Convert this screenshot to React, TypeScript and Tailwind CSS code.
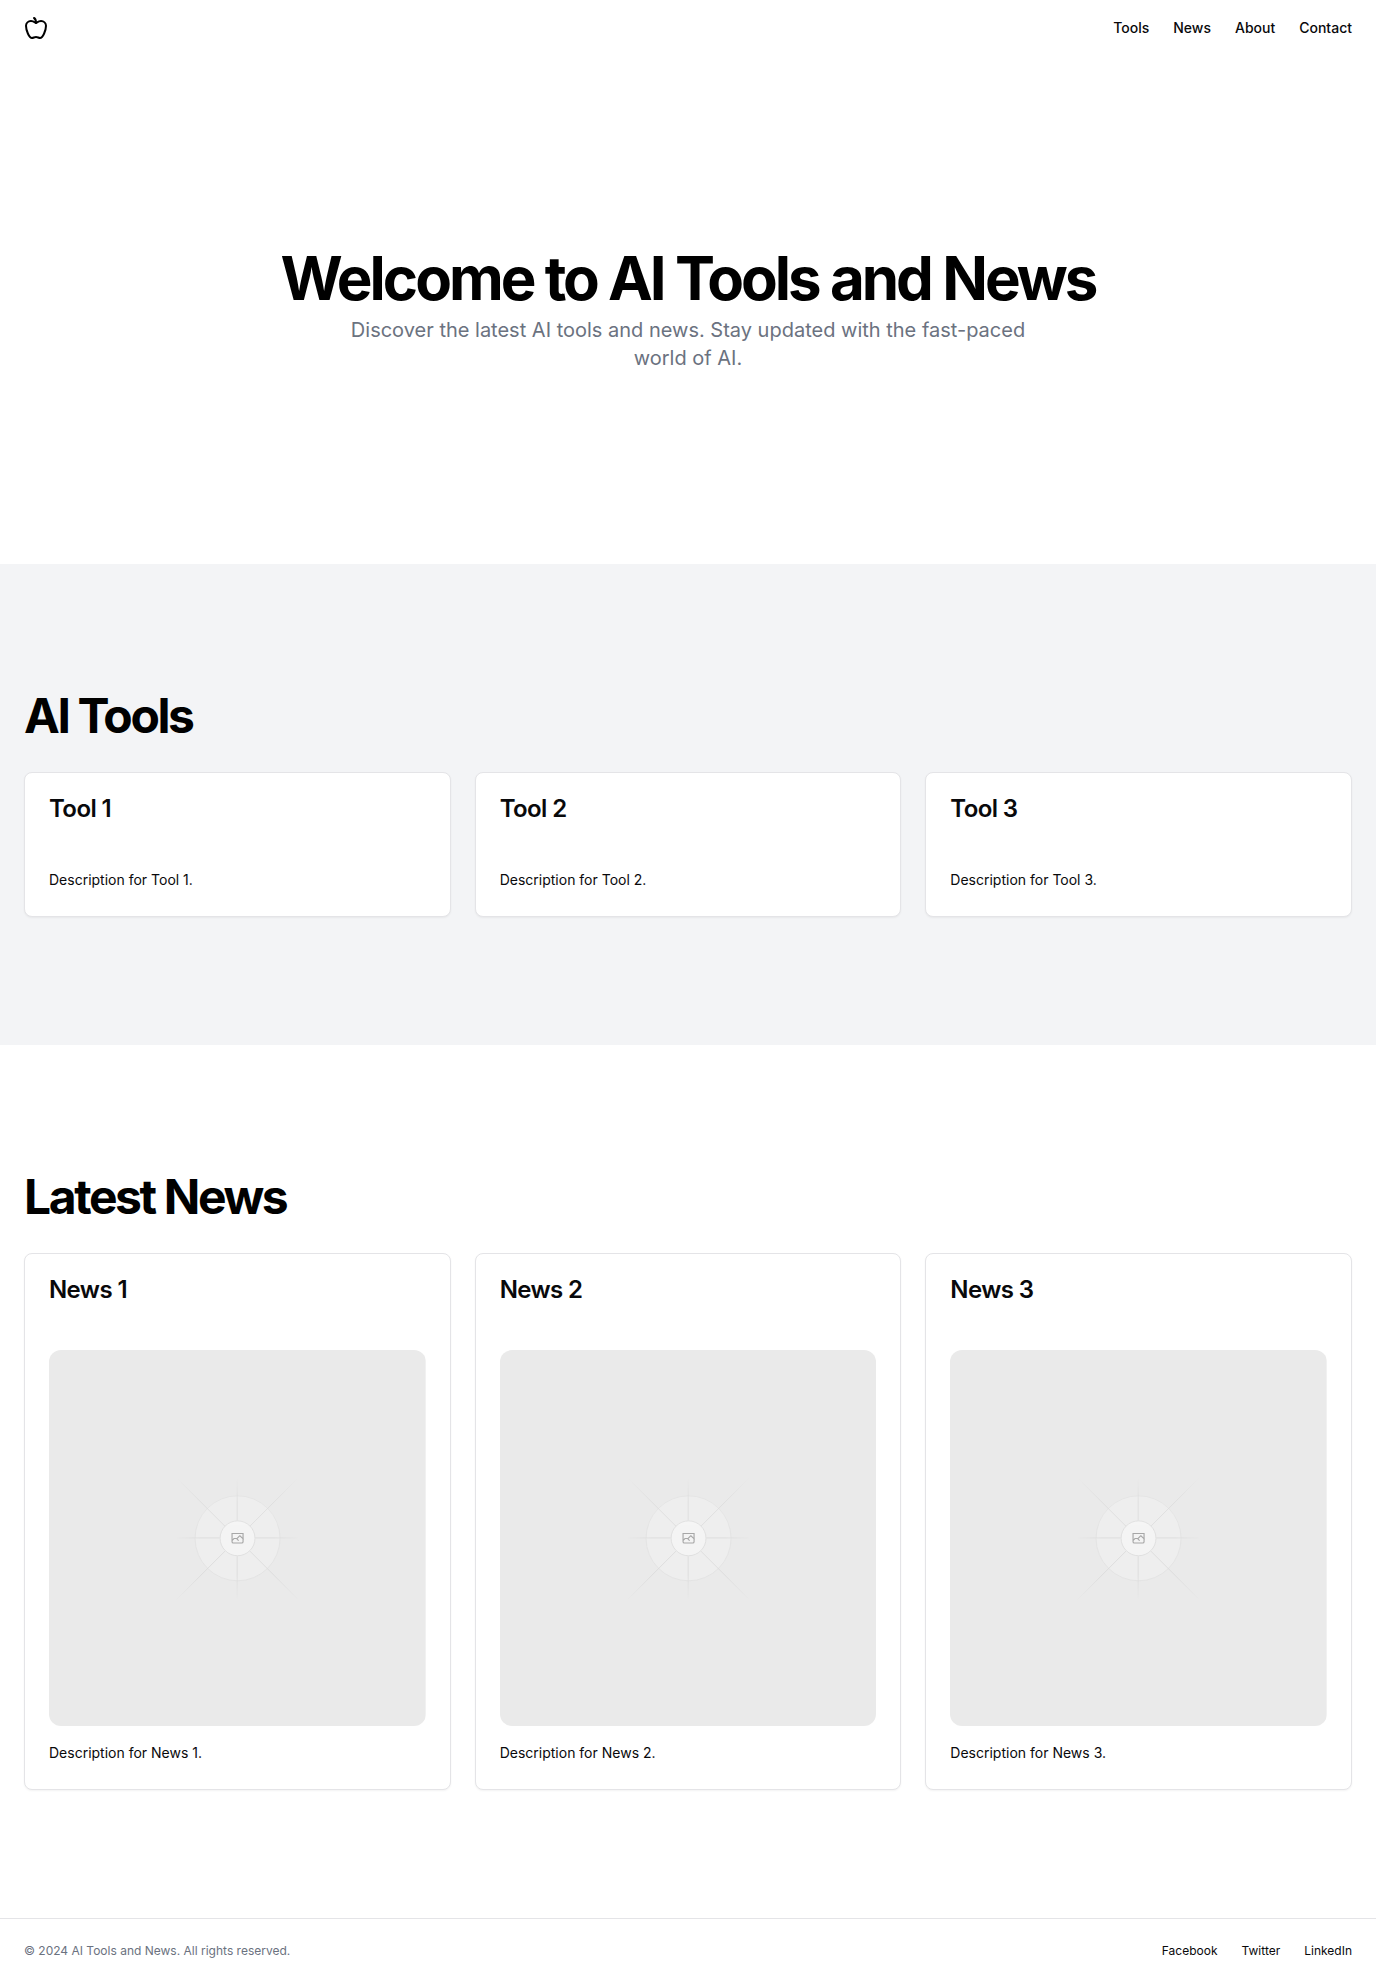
const navLinks = ["Tools", "News", "About", "Contact"];
const socialLinks = ["Facebook", "Twitter", "LinkedIn"];
const tools = ["Tool 1", "Tool 2", "Tool 3"];
const news = ["News 1", "News 2", "News 3"];

function AppleIcon() {
  return (
    <svg
      viewBox="0 0 24 24"
      fill="none"
      stroke="currentColor"
      strokeWidth="2"
      strokeLinecap="round"
      strokeLinejoin="round"
      aria-hidden="true"
      className="size-6 text-black"
    >
      <path d="M12 20.94c1.5 0 2.75 1.06 4 1.06 3 0 6-8 6-12.22A4.91 4.91 0 0 0 17 5c-2.22 0-4 1.44-5 2-1-.56-2.78-2-5-2a4.9 4.9 0 0 0-5 4.78C2 14 5 22 8 22c1.25 0 2.5-1.06 4-1.06Z" />
      <path d="M10 2c1 .5 2 2 2 5" />
    </svg>
  );
}

function Placeholder({ id, label }: { id: string; label: string }) {
  const fade = (name: string, x1: number, y1: number, x2: number, y2: number) => (
    <linearGradient id={`${id}-${name}`} x1={x1} y1={y1} x2={x2} y2={y2} gradientUnits="userSpaceOnUse">
      <stop stopColor="#C9C9C9" stopOpacity="0" />
      <stop offset=".208" stopColor="#C9C9C9" />
      <stop offset=".792" stopColor="#C9C9C9" />
      <stop offset="1" stopColor="#C9C9C9" stopOpacity="0" />
    </linearGradient>
  );
  return (
    <svg viewBox="0 0 1200 1200" fill="none" role="img" aria-label={label} className="block aspect-square w-full rounded-xl">
      <rect width="1200" height="1200" fill="#EAEAEA" rx="3" />
      <g opacity=".5">
        <g opacity=".5">
          <circle cx="600.7" cy="599.9" r="136.6" fill="#FAFAFA" />
          <circle cx="600.7" cy="599.9" r="135.4" stroke="#C9C9C9" strokeWidth="2.418" />
        </g>
        <g strokeWidth="2.418">
          <path stroke={`url(#${id}-a)`} d="M404.8 796.6 796.3 405.2" />
          <path stroke={`url(#${id}-b)`} d="M404.846 598.671h391.726" />
          <path stroke={`url(#${id}-c)`} d="M599.5 795.742V404.017" />
          <path stroke={`url(#${id}-d)`} d="m795.717 796.597-391.441-391.44" />
        </g>
        <circle cx="600.7" cy="599.9" r="56.8" fill="#fff" />
        <path
          fill="#666"
          fillRule="evenodd"
          clipRule="evenodd"
          d="M616.426 586.58h-31.434v16.176l3.553-3.554.531-.531h9.068l.074-.074 8.463-8.463h2.565l7.18 7.181V586.58Zm-15.715 14.654 3.698 3.699 1.283 1.282-2.565 2.565-1.282-1.283-5.2-5.199h-6.066l-5.514 5.514-.073.073v2.876a2.418 2.418 0 0 0 2.418 2.418h26.598a2.418 2.418 0 0 0 2.418-2.418v-8.317l-8.463-8.463-7.181 7.181-.071.072Zm-19.347 5.442v4.085a6.045 6.045 0 0 0 6.046 6.045h26.598a6.044 6.044 0 0 0 6.045-6.045v-7.108l1.356-1.355-1.282-1.283-.074-.073v-17.989h-38.689v23.43l-.146.146.146.147Z"
        />
        <circle cx="600.7" cy="599.9" r="55.6" stroke="#C9C9C9" strokeWidth="2.418" />
      </g>
      <defs>
        {fade("a", 404.8, 796.6, 796.3, 405.2)}
        {fade("b", 404.8, 598.7, 796.6, 598.7)}
        {fade("c", 599.5, 795.7, 599.5, 404)}
        {fade("d", 795.7, 796.6, 404.3, 405.2)}
      </defs>
    </svg>
  );
}

function Card({ title, image = false }: { title: string; image?: boolean }) {
  return (
    <article className="rounded-lg border border-[#e4e4e7] bg-white text-[#09090b] shadow-xs">
      <h3 className="p-6 text-2xl leading-none font-semibold tracking-tight">{title}</h3>
      <div className="flex flex-col gap-4 p-6">
        {image && <Placeholder id={title.replace(" ", "-")} label={title} />}
        <p className="text-sm leading-relaxed">Description for {title}.</p>
      </div>
    </article>
  );
}

export default function App() {
  return (
    <div className="flex min-h-screen flex-col bg-white font-['Inter',sans-serif] text-[#09090b]">
      <header className="flex h-14 items-center justify-between px-6">
        <a href="#" aria-label="AI Tools and News">
          <AppleIcon />
        </a>
        <nav className="flex gap-6">
          {navLinks.map((l) => (
            <a key={l} href={`#${l.toLowerCase()}`} className="text-sm font-medium">
              {l}
            </a>
          ))}
        </nav>
      </header>
      <main className="flex-1">
        <section className="flex flex-col items-center gap-2 px-6 py-48 text-center">
          <h1 className="text-6xl leading-none font-bold tracking-tighter text-black">Welcome to AI Tools and News</h1>
          <p className="max-w-[700px] text-xl text-[#6b7280]">
            Discover the latest AI tools and news. Stay updated with the fast-paced world of AI.
          </p>
        </section>
        <section id="tools" className="bg-gray-100 px-6 py-32">
          <h2 className="mb-8 text-5xl leading-none font-bold tracking-tighter text-black">AI Tools</h2>
          <div className="grid grid-cols-3 gap-6">
            {tools.map((t) => (
              <Card key={t} title={t} />
            ))}
          </div>
        </section>
        <section id="news" className="px-6 py-32">
          <h2 className="mb-8 text-5xl leading-none font-bold tracking-tighter text-black">Latest News</h2>
          <div className="grid grid-cols-3 gap-6">
            {news.map((n) => (
              <Card key={n} title={n} image />
            ))}
          </div>
        </section>
      </main>
      <footer className="flex items-center justify-between border-t border-[#e4e4e7] px-6 py-6 text-xs">
        <p className="text-[#6b7280]">© 2024 AI Tools and News. All rights reserved.</p>
        <nav className="flex gap-6">
          {socialLinks.map((l) => (
            <a key={l} href="#">
              {l}
            </a>
          ))}
        </nav>
      </footer>
    </div>
  );
}
